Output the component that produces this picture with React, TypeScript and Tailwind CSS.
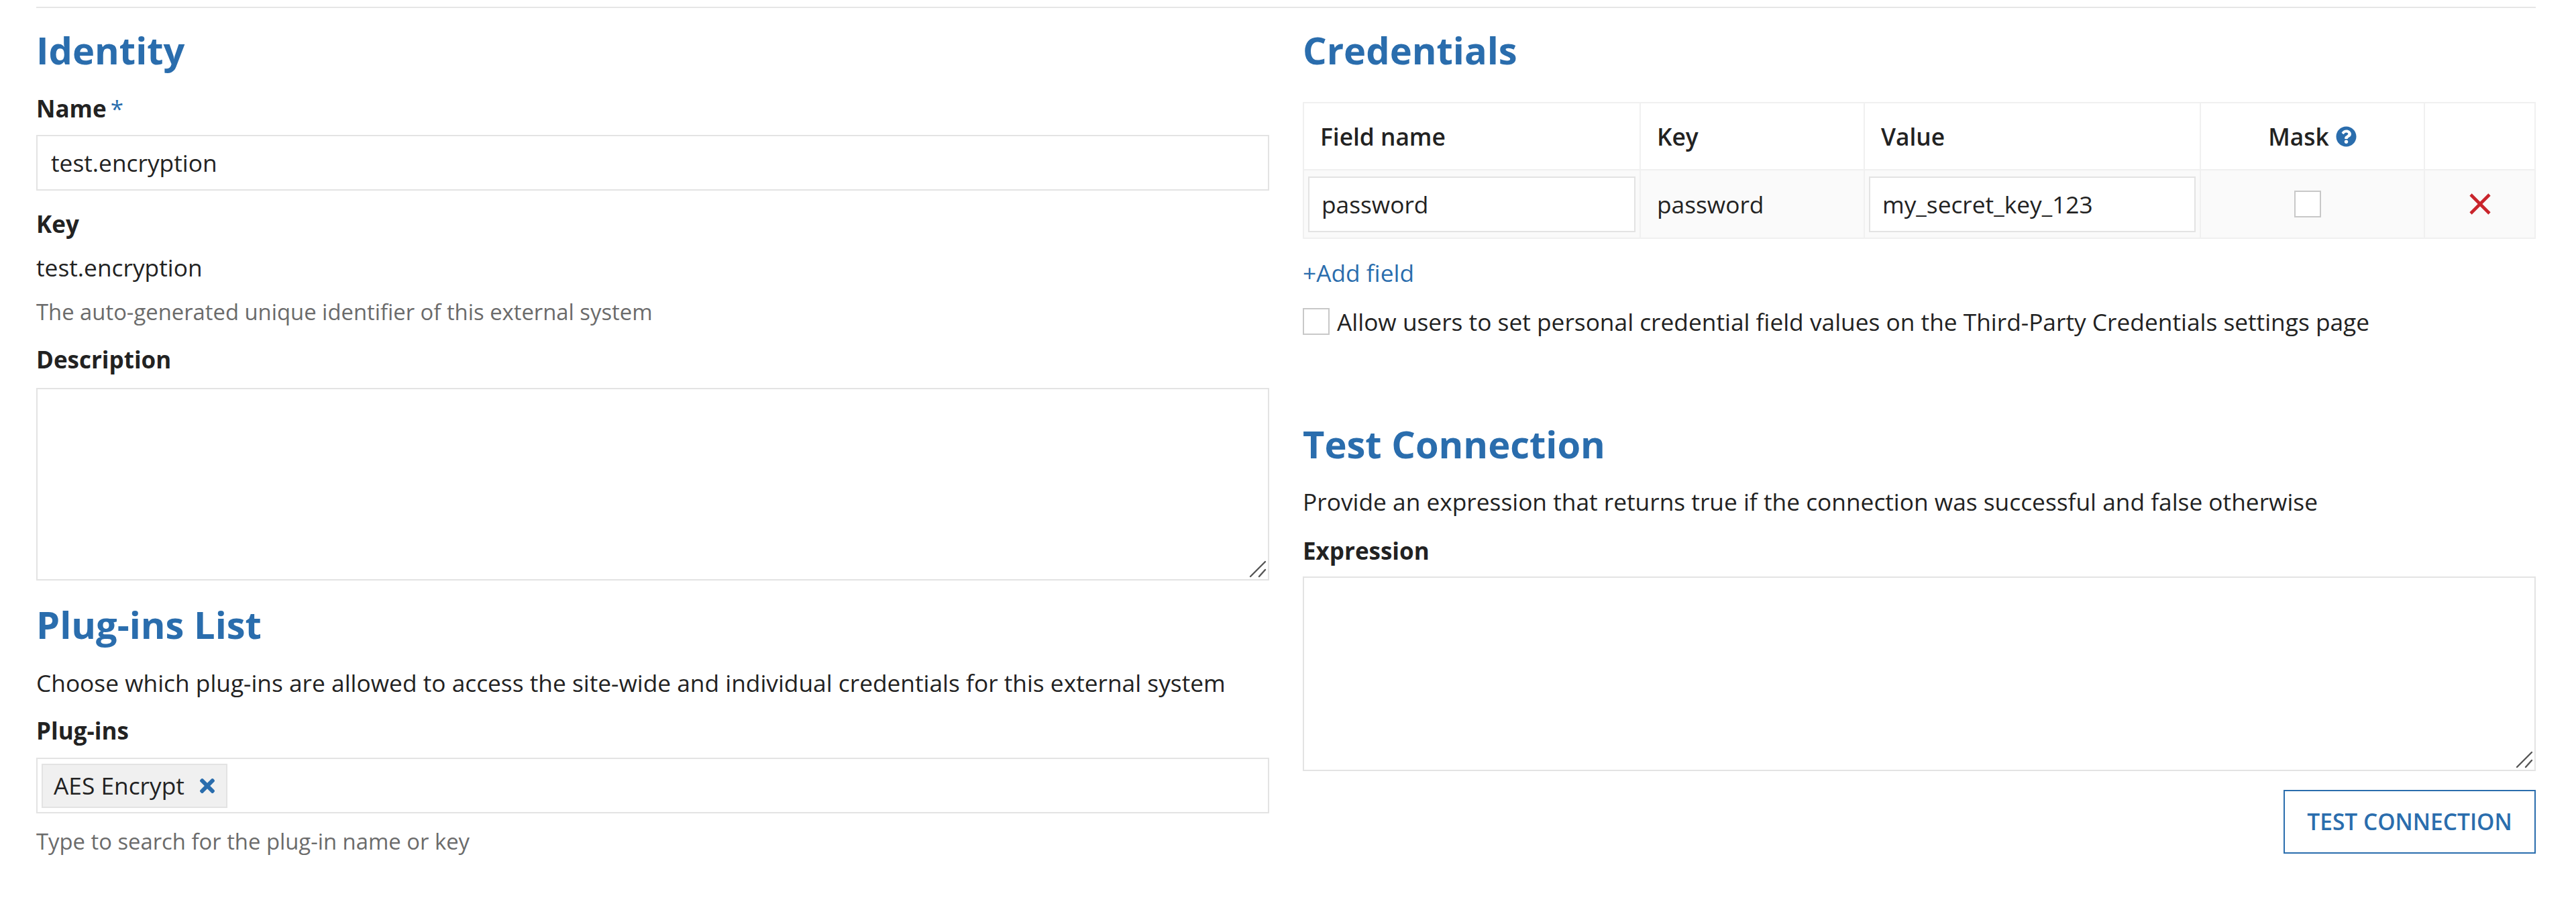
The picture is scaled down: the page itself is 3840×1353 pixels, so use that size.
import React from 'react';
import { FaQuestionCircle, FaTimes } from 'react-icons/fa';

const Heading = ({ children, className = '' }: { children: React.ReactNode; className?: string }) => (
  <h2 className={`text-[56px] leading-[60px] font-bold text-[#2a6dad] ${className}`}>{children}</h2>
);

const Label = ({ children, className = '' }: { children: React.ReactNode; className?: string }) => (
  <div className={`text-[35px] leading-[48px] font-bold text-[#222222] ${className}`}>{children}</div>
);

const Helper = ({ children, className = '' }: { children: React.ReactNode; className?: string }) => (
  <div className={`text-[32.8px] leading-[44px] text-[#6b6b6b] ${className}`}>{children}</div>
);

// textarea with the big grab handle from the screenshot
const TextBox = ({ className = '' }: { className?: string }) => (
  <div className={`relative ${className}`}>
    <textarea readOnly className="block w-full h-full resize-none border-2 border-[#e3e3e3] bg-white outline-none" />
    <svg className="absolute right-[4px] bottom-[4px] w-[26px] h-[26px]" viewBox="0 0 26 26" stroke="#555555" strokeWidth="2.4" strokeLinecap="round">
      <line x1="2" y1="24" x2="24" y2="2" />
      <line x1="15" y1="24" x2="24" y2="14" />
    </svg>
  </div>
);

const Checkbox = () => <span className="block w-[40px] h-[40px] shrink-0 border-2 border-[#c8c8c8] bg-white" />;

export default function App() {
  return (
    <div className="w-[3840px] h-[1353px] bg-white pl-[54px] pr-[60px] pt-[10px] font-['Open_Sans',sans-serif] overflow-hidden">
      <div className="h-[2px] bg-[#e6e6e6]" />
      <div className="grid grid-cols-[1838px_1838px] gap-x-[50px]">
        {/* left column */}
        <div className="pt-[32px]">
          <Heading>Identity</Heading>
          <Label className="mt-[34px]">
            Name<span className="ml-[6px] font-normal text-[#2a6dad]">*</span>
          </Label>
          <div className="mt-[15px] h-[83px] border-2 border-[#e3e3e3] pl-[20px] flex items-center text-[35.3px] text-[#222222]">test.encryption</div>
          <Label className="mt-[26px]">Key</Label>
          <div className="mt-[16px] text-[35.3px] leading-[48px] text-[#222222]">test.encryption</div>
          <Helper className="mt-[21px]">The auto-generated unique identifier of this external system</Helper>
          <Label className="mt-[25px]">Description</Label>
          <TextBox className="mt-[18px] h-[287px]" />
          <Heading className="mt-[35px]">Plug-ins List</Heading>
          <div className="mt-[33px] text-[35.3px] leading-[48px] text-[#222222]">Choose which plug-ins are allowed to access the site-wide and individual credentials for this external system</div>
          <Label className="mt-[24px]">Plug-ins</Label>
          <div className="mt-[16px] h-[83px] border-2 border-[#e3e3e3] pl-[6px] flex items-center">
            <div className="h-[66px] flex items-center pl-[16px] pr-[14px] gap-[20px] bg-[#f0f0f0] border-2 border-[#e3e3e3] text-[35.3px] text-[#222222]">
              AES Encrypt
              <FaTimes className="w-[28px] h-[32px] text-[#2a6dad]" />
            </div>
          </div>
          <Helper className="mt-[20px]">Type to search for the plug-in name or key</Helper>
        </div>

        {/* right column */}
        <div className="pt-[32px]">
          <Heading>Credentials</Heading>
          <table className="mt-[48px] w-full table-fixed border-collapse border-2 border-[#f0f0f0] text-[35.3px] text-[#222222]">
            <colgroup>
              <col className="w-[502px]" />
              <col className="w-[334px]" />
              <col className="w-[501px]" />
              <col className="w-[334px]" />
              <col />
            </colgroup>
            <thead>
              <tr className="h-[100px]">
                <th className="border-2 border-[#f0f0f0] pl-[24px] text-left font-semibold">Field name</th>
                <th className="border-2 border-[#f0f0f0] pl-[24px] text-left font-semibold">Key</th>
                <th className="border-2 border-[#f0f0f0] pl-[24px] text-left font-semibold">Value</th>
                <th className="border-2 border-[#f0f0f0] font-semibold">
                  <span className="inline-flex items-center gap-[10px]">
                    Mask <FaQuestionCircle className="w-[31px] h-[31px] text-[#2a6dad]" />
                  </span>
                </th>
                <th className="border-2 border-[#f0f0f0]" />
              </tr>
            </thead>
            <tbody>
              <tr className="h-[102px] bg-[#fafafa]">
                <td className="border-2 border-[#f0f0f0] px-[6px]">
                  <div className="h-[83px] border-2 border-[#e3e3e3] bg-white pl-[18px] flex items-center">password</div>
                </td>
                <td className="border-2 border-[#f0f0f0] pl-[24px]">password</td>
                <td className="border-2 border-[#f0f0f0] px-[6px]">
                  <div className="h-[83px] border-2 border-[#e3e3e3] bg-white pl-[18px] flex items-center">my_secret_key_123</div>
                </td>
                <td className="border-2 border-[#f0f0f0]">
                  <div className="flex justify-center pr-[14px]"><Checkbox /></div>
                </td>
                <td className="border-2 border-[#f0f0f0]">
                  <div className="flex justify-center">
                    <svg className="w-[32px] h-[32px]" viewBox="0 0 32 32" stroke="#c9242b" strokeWidth="4.6">
                      <line x1="2" y1="2" x2="30" y2="30" />
                      <line x1="30" y1="2" x2="2" y2="30" />
                    </svg>
                  </div>
                </td>
              </tr>
            </tbody>
          </table>
          <div className="mt-[26px] text-[35.3px] leading-[48px] text-[#2a6dad]">+Add field</div>
          <div className="mt-[25px] flex items-center gap-[11px] text-[35.3px] leading-[48px] text-[#222222]">
            <Checkbox />
            Allow users to set personal credential field values on the Third-Party Credentials settings page
          </div>
          <Heading className="mt-[128px]">Test Connection</Heading>
          <div className="mt-[32px] text-[35.3px] leading-[48px] text-[#222222]">Provide an expression that returns true if the connection was successful and false otherwise</div>
          <Label className="mt-[26px]">Expression</Label>
          <TextBox className="mt-[14px] h-[290px]" />
          <div className="mt-[28px] flex justify-end">
            <button className="w-[376px] h-[95px] border-2 border-[#2a6dad] text-[33.5px] font-semibold text-[#2a6dad]">TEST CONNECTION</button>
          </div>
        </div>
      </div>
    </div>
  );
}
